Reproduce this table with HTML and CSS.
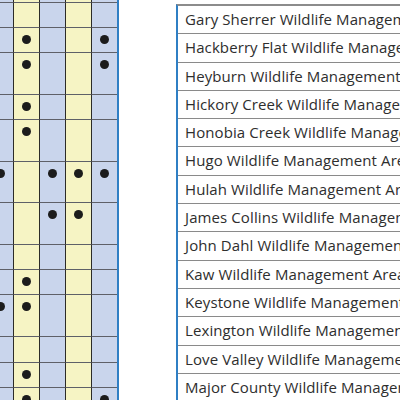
FILE: index.html
```html
<!DOCTYPE html>
<html>
<head>
<meta charset="utf-8">
<link rel="stylesheet" href="styles.css">
</head>
<body>
<div class="page">
  <div class="chart">
    <div class="cell c0"></div><div class="cell c1"></div><div class="cell c2"></div><div class="cell c3"></div><div class="cell c4"></div>
    <div class="cell c0"></div><div class="cell c1"></div><div class="cell c2"></div><div class="cell c3"></div><div class="cell c4"></div>
    <div class="cell c0"></div><div class="cell c1"><span class="dot"></span></div><div class="cell c2"></div><div class="cell c3"></div><div class="cell c4"><span class="dot"></span></div>
    <div class="cell c0"></div><div class="cell c1"><span class="dot"></span></div><div class="cell c2"></div><div class="cell c3"></div><div class="cell c4"><span class="dot"></span></div>
    <div class="cell c0"></div><div class="cell c1"><span class="dot"></span></div><div class="cell c2"></div><div class="cell c3"></div><div class="cell c4"></div>
    <div class="cell c0"></div><div class="cell c1"><span class="dot"></span></div><div class="cell c2"></div><div class="cell c3"></div><div class="cell c4"></div>
    <div class="cell c0"><span class="dot"></span></div><div class="cell c1"></div><div class="cell c2"><span class="dot"></span></div><div class="cell c3"><span class="dot"></span></div><div class="cell c4"><span class="dot"></span></div>
    <div class="cell c0"></div><div class="cell c1"></div><div class="cell c2"><span class="dot"></span></div><div class="cell c3"><span class="dot"></span></div><div class="cell c4"></div>
    <div class="cell c0"></div><div class="cell c1"></div><div class="cell c2"></div><div class="cell c3"></div><div class="cell c4"></div>
    <div class="cell c0"></div><div class="cell c1"><span class="dot"></span></div><div class="cell c2"></div><div class="cell c3"></div><div class="cell c4"></div>
    <div class="cell c0"><span class="dot"></span></div><div class="cell c1"><span class="dot"></span></div><div class="cell c2"></div><div class="cell c3"></div><div class="cell c4"></div>
    <div class="cell c0"></div><div class="cell c1"></div><div class="cell c2"></div><div class="cell c3"></div><div class="cell c4"></div>
    <div class="cell c0"></div><div class="cell c1"><span class="dot"></span></div><div class="cell c2"></div><div class="cell c3"></div><div class="cell c4"></div>
    <div class="cell c0"></div><div class="cell c1"><span class="dot"></span></div><div class="cell c2"></div><div class="cell c3"></div><div class="cell c4"><span class="dot"></span></div>
  </div>
  <ul class="areas">
    <li>Gary Sherrer Wildlife Management Area</li>
    <li>Hackberry Flat Wildlife Management Area</li>
    <li>Heyburn Wildlife Management Area</li>
    <li>Hickory Creek Wildlife Management Area</li>
    <li>Honobia Creek Wildlife Management Area</li>
    <li>Hugo Wildlife Management Area</li>
    <li>Hulah Wildlife Management Area</li>
    <li>James Collins Wildlife Management Area</li>
    <li>John Dahl Wildlife Management Area</li>
    <li>Kaw Wildlife Management Area</li>
    <li>Keystone Wildlife Management Area</li>
    <li>Lexington Wildlife Management Area</li>
    <li>Love Valley Wildlife Management Area</li>
    <li>Major County Wildlife Management Area</li>
  </ul>
</div>
</body>
</html>
```
FILE: styles.css
```css
html, body {
  margin: 0;
  padding: 0;
  background: #ffffff;
  overflow: hidden;
  width: 400px;
  height: 400px;
}

.page {
  display: flex;
  align-items: flex-start;
  width: 600px;
}

.chart {
  flex: none;
  display: grid;
  grid-template-columns: repeat(5, 26px);
  grid-template-rows: 25px 25px 25px 42px 25px 42px 41px 42px 25px 25px 42px 26px 25px 25px;
  margin-left: -13px;
  margin-top: -22px;
  border-right: 2px solid #2f7fc4;
}

.cell {
  box-sizing: border-box;
  border-bottom: 1px solid #5e6068;
  display: flex;
  justify-content: center;
  align-items: flex-start;
}

.c0, .c2, .c4 { background: #c9d5ec; }
.c1, .c3 { background: #f6f4c4; }
.c1, .c2, .c3, .c4 { border-left: 1px solid #2c2c28; }

.dot {
  width: 9px;
  height: 9px;
  margin-top: 7px;
  border-radius: 50%;
  background: #1c1c1c;
}

.areas {
  flex: none;
  list-style: none;
  margin: 4px 0 0 57px;
  padding: 0;
  border-left: 2px solid #2f7fc4;
  border-top: 2px solid #8c8c8c;
  font-family: "Open Sans", Lato, sans-serif;
  font-size: 15px;
  letter-spacing: 0.1px;
  color: #2e2e2e;
  white-space: nowrap;
}

.areas li {
  box-sizing: border-box;
  height: 28.3px;
  border-bottom: 1px solid #8a8a8a;
  padding: 4px 0 0 7px;
  line-height: 18px;
}
```
